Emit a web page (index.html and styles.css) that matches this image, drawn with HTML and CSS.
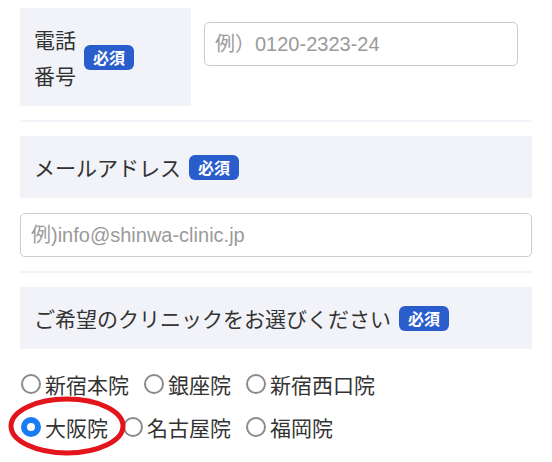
FILE: index.html
```html
<!DOCTYPE html>
<html lang="ja">
<head>
  <meta charset="UTF-8">
  <title>お問い合わせフォーム</title>
  <link rel="stylesheet" href="styles.css">
</head>
<body>
  <form class="form">
    <!-- 電話番号 -->
    <div class="row row-inline">
      <div class="head">
        <span class="label">電話<br>番号</span>
        <span class="badge">必須</span>
      </div>
      <div class="cell">
        <input type="tel" class="field" placeholder="例）0120-2323-24">
      </div>
    </div>

    <!-- メールアドレス -->
    <div class="row">
      <div class="head">
        <span class="label">メールアドレス</span>
        <span class="badge">必須</span>
      </div>
      <input type="email" class="field field-wide" placeholder="例)info@shinwa-clinic.jp">
    </div>

    <!-- クリニック -->
    <div class="row row-last">
      <div class="head">
        <span class="label">ご希望のクリニックをお選びください</span>
        <span class="badge">必須</span>
      </div>
      <div class="choices">
        <div class="choice-line">
          <label class="choice"><input type="radio" name="clinic"> 新宿本院</label>
          <label class="choice"><input type="radio" name="clinic"> 銀座院</label>
          <label class="choice"><input type="radio" name="clinic"> 新宿西口院</label>
        </div>
        <div class="choice-line">
          <label class="choice"><input type="radio" name="clinic" checked> 大阪院</label>
          <label class="choice"><input type="radio" name="clinic"> 名古屋院</label>
          <label class="choice"><input type="radio" name="clinic"> 福岡院</label>
          <!-- 手書きの丸印 -->
          <svg class="mark" width="124" height="66" viewBox="0 0 124 66">
            <ellipse cx="60" cy="32" rx="56" ry="27" fill="none" stroke="#e3141b" stroke-width="5"/>
          </svg>
        </div>
      </div>
    </div>
  </form>
</body>
</html>
```

FILE: styles.css
```css
/* Page */
body {
  margin: 0;
  background: #ffffff;
  font-family: "Noto Sans CJK JP", "Noto Sans", sans-serif;
  color: #333333;
}

.form {
  width: 512px;
  padding: 8px 20px 0;
}

/* Rows and separators */
.row {
  padding-bottom: 14px;
  margin-bottom: 14px;
  border-bottom: 2px solid #f3f3f9;
}

.row-inline {
  display: flex;
}

.row-last {
  border-bottom: none;
}

/* Label box */
.head {
  display: flex;
  align-items: center;
  gap: 8px;
  background: #f2f3f8;
  padding: 13px 13px 13px 14px;
  font-size: 21px;
  line-height: 36px;
}

.row-inline .head {
  width: 144px;
  flex-shrink: 0;
}

.badge {
  display: inline-block;
  background: #2a5dcc;
  color: #ffffff;
  font-size: 16px;
  font-weight: bold;
  line-height: 25px;
  padding: 0 9px;
  border-radius: 6px;
}

/* Inputs */
.cell {
  padding: 14px 13px;
}

.field {
  box-sizing: border-box;
  width: 314px;
  height: 44px;
  padding: 0 10px;
  border: 1px solid #cccccc;
  border-radius: 5px;
  font-family: "Liberation Sans", "Noto Sans CJK JP", sans-serif;
  font-size: 20px;
  color: #333333;
}

.field::placeholder {
  color: #9a9a9a;
}

.field-wide {
  width: 100%;
  margin-top: 15px;
}

/* Radio choices */
.choices {
  padding-top: 13px;
}

.choice-line {
  position: relative;
  display: flex;
  gap: 15px;
  height: 43px;
  align-items: center;
  padding-left: 1px;
}

.choice {
  display: flex;
  align-items: center;
  gap: 4px;
  font-size: 21px;
}

.choice input {
  appearance: none;
  margin: 0;
  width: 20px;
  height: 20px;
  border: 2px solid #8a8a8a;
  border-radius: 50%;
  box-sizing: border-box;
}

.choice input:checked {
  border: 6px solid #1a7cf5;
  background: #ffffff;
}

.mark {
  position: absolute;
  left: -13px;
  top: -11px;
}
```
